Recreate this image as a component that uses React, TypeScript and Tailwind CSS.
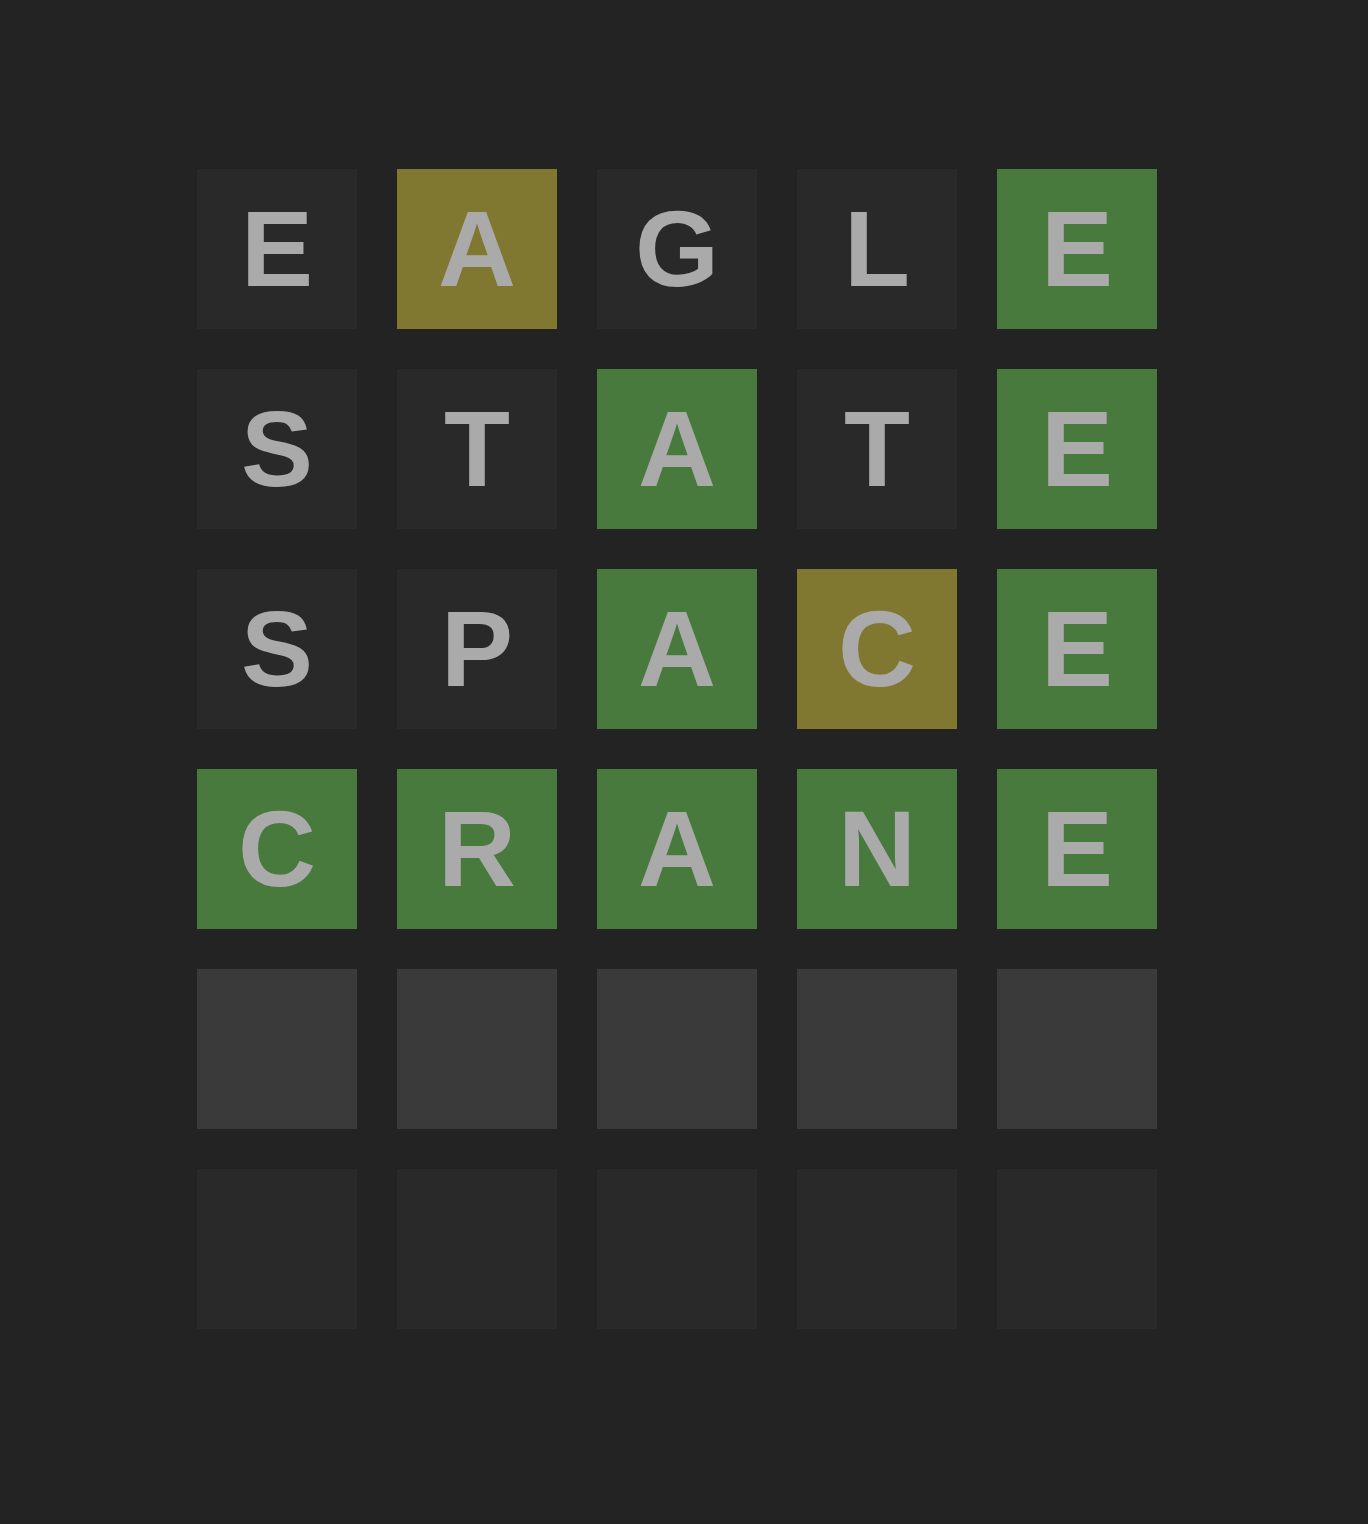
import React from "react";

type Tile = { letter: string; state: "absent" | "present" | "correct" | "active" | "empty" };

const rows: Tile[][] = [
  [
    { letter: "E", state: "absent" },
    { letter: "A", state: "present" },
    { letter: "G", state: "absent" },
    { letter: "L", state: "absent" },
    { letter: "E", state: "correct" },
  ],
  [
    { letter: "S", state: "absent" },
    { letter: "T", state: "absent" },
    { letter: "A", state: "correct" },
    { letter: "T", state: "absent" },
    { letter: "E", state: "correct" },
  ],
  [
    { letter: "S", state: "absent" },
    { letter: "P", state: "absent" },
    { letter: "A", state: "correct" },
    { letter: "C", state: "present" },
    { letter: "E", state: "correct" },
  ],
  [
    { letter: "C", state: "correct" },
    { letter: "R", state: "correct" },
    { letter: "A", state: "correct" },
    { letter: "N", state: "correct" },
    { letter: "E", state: "correct" },
  ],
  [...new Array(5)].map(() => ({ letter: "", state: "active" as const })),
  [...new Array(5)].map(() => ({ letter: "", state: "empty" as const })),
];

const bg = {
  absent: "bg-[#292929]",
  present: "bg-[#807830]",
  correct: "bg-[#477a3c]",
  active: "bg-[#3a3a3a]",
  empty: "bg-[#292929]",
};

const App = () => {
  return (
    <div className="min-h-[1524px] w-full bg-[#232323] pt-[169px] pl-[197px]">
      <div className="grid grid-cols-[repeat(5,160px)] gap-[40px] w-fit">
        {rows.flat().map((tile, i) => (
          <div
            key={i}
            className={`${bg[tile.state]} h-[160px] w-[160px] flex items-center justify-center text-[#aaaaaa] font-bold text-[108px] leading-none font-['Liberation_Sans',Arial,sans-serif]`}
          >
            {tile.letter}
          </div>
        ))}
      </div>
    </div>
  );
};

export default App;
